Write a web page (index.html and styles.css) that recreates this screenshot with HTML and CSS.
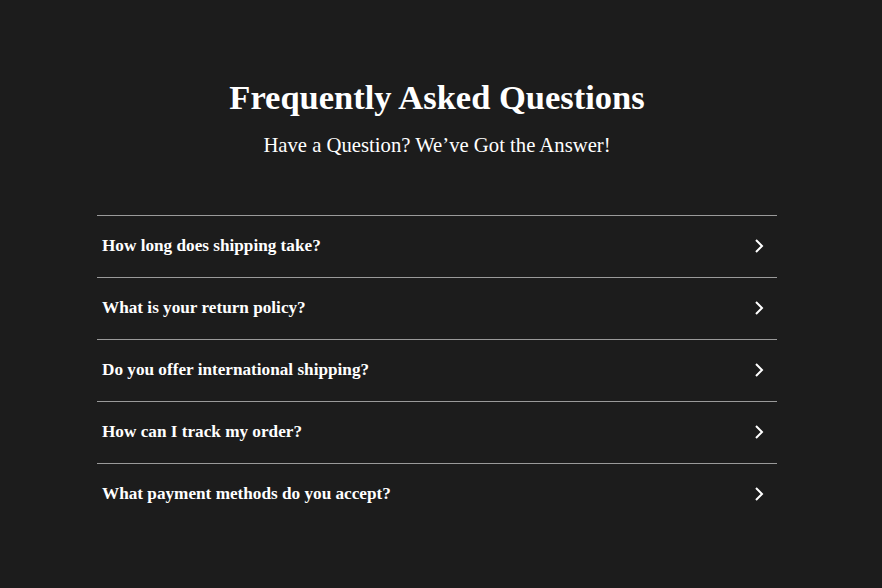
FILE: index.html
```html
<!DOCTYPE html>
<html lang="en">
<head>
    <meta charset="UTF-8">
    <meta name="viewport" content="width=device-width, initial-scale=1.0">
    <title>FAQ</title>
    <link rel="stylesheet" href="styles.css">
</head>
<body>

    <div class="page">
        <div class="faq-header">
            <h1>Frequently Asked Questions</h1>
            <p>Have a Question? We’ve Got the Answer!</p>
        </div>

        <!-- Список вопросов -->
        <div class="faq-list">
            <div class="faq-item">
                <span>How long does shipping take?</span>
                <svg class="chevron" viewBox="0 0 12 16"><path d="M3 2l6 6-6 6"/></svg>
            </div>
            <div class="faq-item">
                <span>What is your return policy?</span>
                <svg class="chevron" viewBox="0 0 12 16"><path d="M3 2l6 6-6 6"/></svg>
            </div>
            <div class="faq-item">
                <span>Do you offer international shipping?</span>
                <svg class="chevron" viewBox="0 0 12 16"><path d="M3 2l6 6-6 6"/></svg>
            </div>
            <div class="faq-item">
                <span>How can I track my order?</span>
                <svg class="chevron" viewBox="0 0 12 16"><path d="M3 2l6 6-6 6"/></svg>
            </div>
            <div class="faq-item">
                <span>What payment methods do you accept?</span>
                <svg class="chevron" viewBox="0 0 12 16"><path d="M3 2l6 6-6 6"/></svg>
            </div>
        </div>
    </div>

</body>
</html>
```

FILE: styles.css
```css
body {
    font-family: "Liberation Serif", "Times New Roman", serif;
    background-color: #1c1c1c;
    color: #ffffff;
    margin: 0;
}
.page {
    padding: 78px 8px 0 0;
}
.faq-header {
    text-align: center;
    margin-bottom: 58px;
}
.faq-header h1 {
    font-size: 34.5px;
    font-weight: bold;
    margin: 0 0 17px 0;
}
.faq-header p {
    font-size: 20.7px;
    margin: 0;
}
.faq-list {
    width: 680px;
    margin: 0 auto;
}
.faq-item {
    display: flex;
    justify-content: space-between;
    align-items: center;
    height: 59px;
    padding: 0 12px 2px 5px;
    border-top: 1px solid #9a9a9a;
    font-size: 17.2px;
    font-weight: bold;
}
.chevron {
    width: 12px;
    height: 16px;
    fill: none;
    stroke: #ffffff;
    stroke-width: 2;
}
```
